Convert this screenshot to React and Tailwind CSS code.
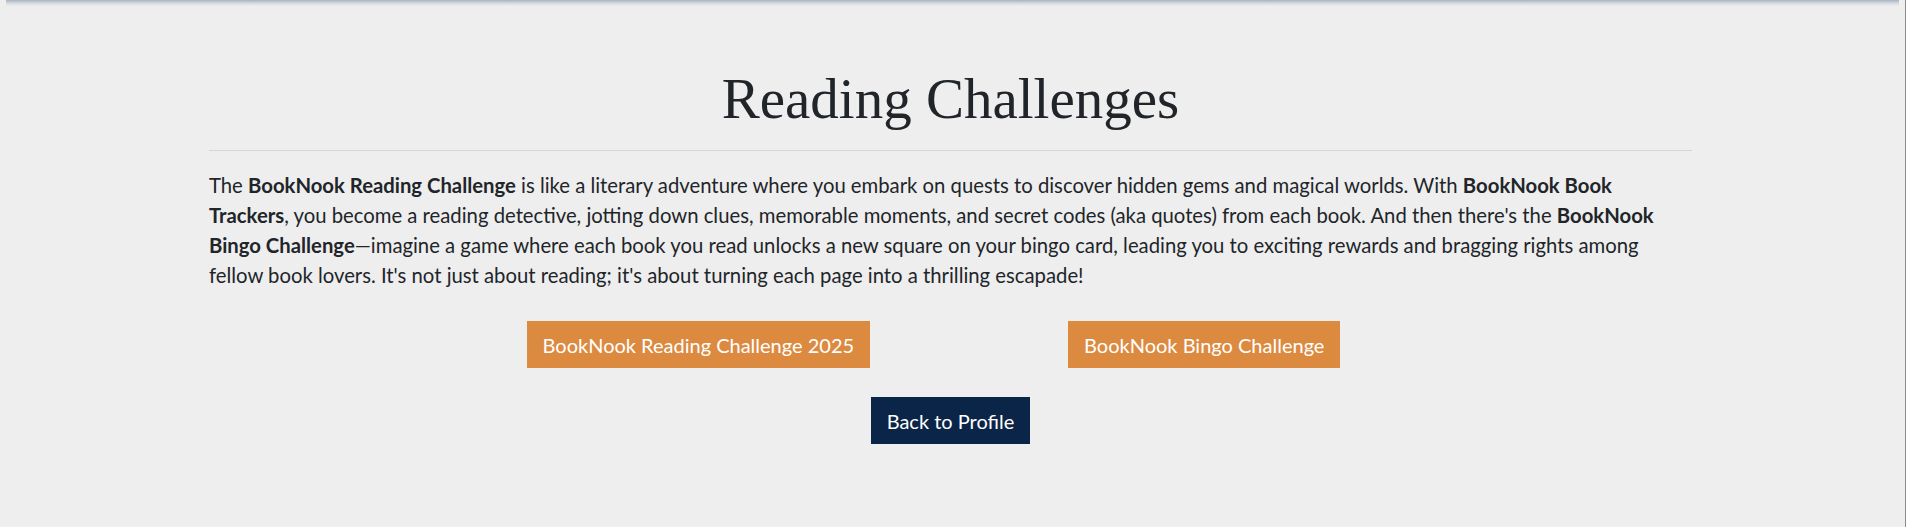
import React from "react";

const ChallengeButton = ({ children, className = "" }) => (
    <button type="button" className={`h-[47px] px-4 text-[20px] text-white ${className}`}>
        {children}
    </button>
);

const App = () => {
    return (
        <div className="flex min-h-[527px] w-full bg-[#eeeeee] font-['Lato',sans-serif] text-[#212529]">
            <div className="flex-1">
                {/* shadow left by the navbar above */}
                <div className="mx-[6px] h-[6px] bg-gradient-to-b from-[#a8b2c1] via-[#d4d8de] to-[#eeeeee]" />

                <main className="ml-[209px] w-[1483px] pb-16">
                    <h1 className="pt-[59px] text-center font-['Liberation_Serif',serif] text-[57px] leading-[1.2]">
                        Reading Challenges
                    </h1>
                    <hr className="mt-[17px] border-t border-[#d6d6d6]" />

                    <p className="mt-[19px] text-[20.3px] leading-[30px]">
                        The <b>BookNook Reading Challenge</b> is like a literary adventure where you embark on quests to discover hidden gems and magical worlds. With <b>BookNook Book Trackers</b>, you become a reading detective, jotting down clues, memorable moments, and secret codes (aka quotes) from each book. And then there's the <b>BookNook Bingo Challenge</b>—imagine a game where each book you read unlocks a new square on your bingo card, leading you to exciting rewards and bragging rights among fellow book lovers. It's not just about reading; it's about turning each page into a thrilling escapade!
                    </p>

                    <div className="mt-[31px] flex justify-center gap-[198px] pr-[34px]">
                        <ChallengeButton className="bg-[#dc8a3f]">BookNook Reading Challenge 2025</ChallengeButton>
                        <ChallengeButton className="bg-[#dc8a3f]">BookNook Bingo Challenge</ChallengeButton>
                    </div>

                    <div className="mt-[29px] flex justify-center">
                        <ChallengeButton className="bg-[#0b2548]">Back to Profile</ChallengeButton>
                    </div>
                </main>
            </div>
            <div className="w-px bg-[#8a8a8a]" />
        </div>
    );
};

export default App;
